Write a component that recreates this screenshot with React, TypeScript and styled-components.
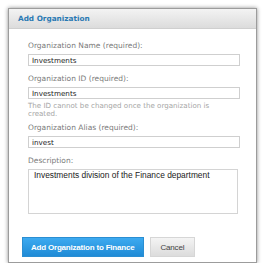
import styled, { createGlobalStyle } from 'styled-components'

const GlobalStyle = createGlobalStyle`
  html, body {
    margin: 0;
    padding: 0;
    background: #ffffff;
  }
  body {
    font-family: Verdana, "DejaVu Sans", sans-serif;
  }
`

export default function App() {
  return (
    <>
      <GlobalStyle />
      <Page>
        <Dialog>
          <Header>
            <Title>Add Organization</Title>
          </Header>
          <Body>
            <Field>
              <Label>Organization Name (required):</Label>
              <Input defaultValue="Investments" />
            </Field>
            <Field>
              <Label>Organization ID (required):</Label>
              <Input defaultValue="Investments" />
              <Hint>The ID cannot be changed once the organization is created.</Hint>
            </Field>
            <Field>
              <Label>Organization Alias (required):</Label>
              <Input defaultValue="invest" />
            </Field>
            <Field>
              <Label>Description:</Label>
              <TextArea defaultValue="Investments division of the Finance department" />
            </Field>
          </Body>
          <Footer>
            <Button $primary>Add Organization to Finance</Button>
            <Button>Cancel</Button>
          </Footer>
        </Dialog>
      </Page>
    </>
  )
}

const Page = styled.div`
  padding: 8px 0 0 8px;
`

const Dialog = styled.div`
  box-sizing: border-box;
  width: 249px;
  height: 255px;
  border: 1px solid #9c9c9c;
  background: #ffffff;
  box-shadow: 0 0 4px rgba(0, 0, 0, 0.45);
  display: flex;
  flex-direction: column;
`

const Header = styled.div`
  height: 19px;
  display: flex;
  align-items: center;
  padding-left: 9px;
  background: linear-gradient(#f3f3f3, #dcdcdc);
  border-bottom: 1px solid #cfcfcf;
`

const Title = styled.h1`
  margin: 0;
  font-size: 7.3px;
  font-weight: bold;
  color: #2a79b3;
`

const Body = styled.div`
  padding: 12px 16px 0 19px;
  display: flex;
  flex-direction: column;
  gap: 8px;
`

const Field = styled.div`
  display: flex;
  flex-direction: column;
`

const Label = styled.label`
  font-size: 7.5px;
  line-height: 10px;
  color: #7a7a7a;
  margin-bottom: 3px;
`

const Input = styled.input`
  box-sizing: border-box;
  width: 212px;
  height: 12px;
  margin: 0;
  padding: 0 3px;
  border: 1px solid #cfcfcf;
  font-family: Verdana, "DejaVu Sans", sans-serif;
  font-size: 7.2px;
  color: #222;
  outline: none;
`

const Hint = styled.div`
  font-size: 7.1px;
  line-height: 8px;
  color: #a6a6a6;
  margin: 3px 0 -3px;
  width: 205px;
`

const TextArea = styled.textarea`
  box-sizing: border-box;
  width: 210px;
  height: 45px;
  margin: 0;
  padding: 0 5px;
  border: 1px solid #d4d4d4;
  font-family: "Liberation Sans", Arial, sans-serif;
  font-size: 8.4px;
  color: #222;
  resize: none;
  outline: none;
`

const Footer = styled.div`
  margin-top: auto;
  padding: 0 0 5px 13px;
  display: flex;
  gap: 6px;
`

const Button = styled.button<{ $primary?: boolean }>`
  height: 20px;
  padding: 0 ${p => (p.$primary ? '8px' : '10px')};
  border: 1px solid ${p => (p.$primary ? '#2a8ed2' : '#d6d6d6')};
  background: ${p =>
    p.$primary
      ? 'linear-gradient(#3daaf0, #1f8bd6)'
      : 'linear-gradient(#f4f4f4, #dcdcdc)'};
  color: ${p => (p.$primary ? '#ffffff' : '#444444')};
  font-family: "Liberation Sans", Arial, sans-serif;
  font-size: 8px;
  font-weight: ${p => (p.$primary ? 'bold' : 'normal')};
  letter-spacing: -0.2px;
`
